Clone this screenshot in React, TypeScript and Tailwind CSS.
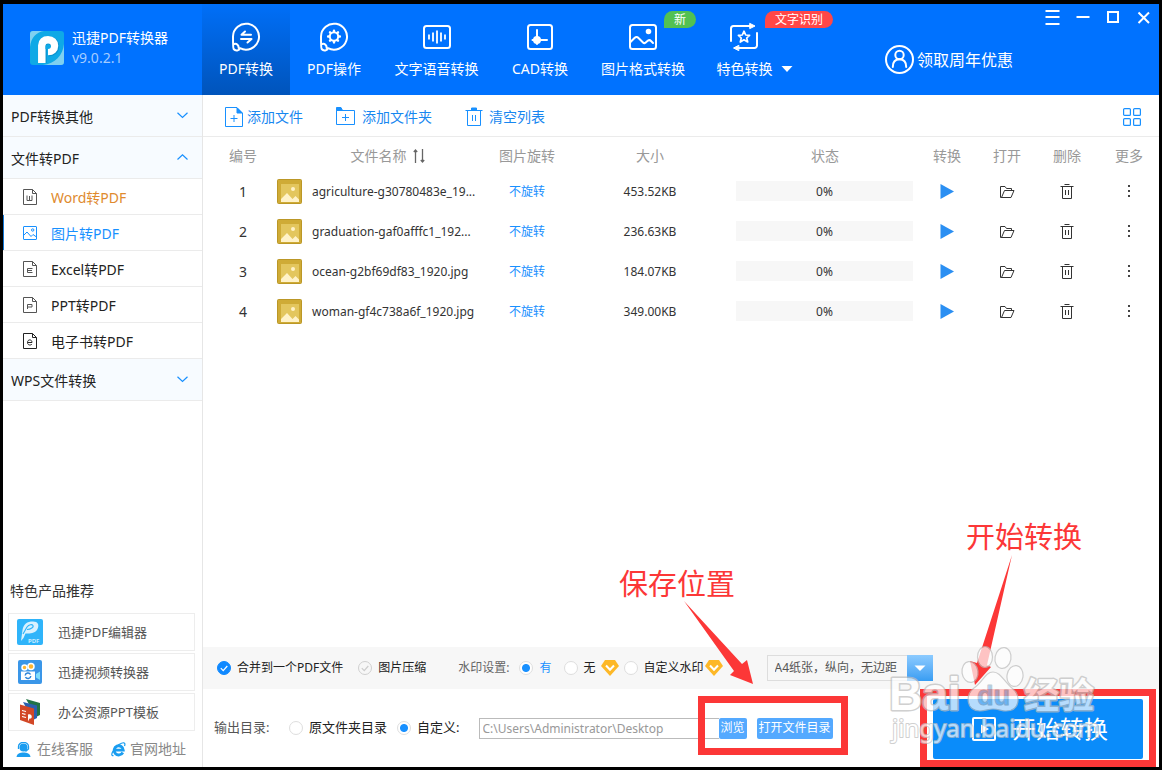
import React from 'react';

const RED = '#fc3737';

const files = [
  { name: 'agriculture-g30780483e_19...', size: '453.52KB' },
  { name: 'graduation-gaf0afffc1_192...', size: '236.63KB' },
  { name: 'ocean-g2bf69df83_1920.jpg', size: '184.07KB' },
  { name: 'woman-gf4c738a6f_1920.jpg', size: '349.00KB' },
];

const BubbleShape = () => (
  <path d="M2 14.5A13 13 0 1 1 9 26.2C8.2 28.6 4.6 29.4 2.6 27 2 26.2 2 25 2 14.5ZM3.2 22C5.6 21 8 23.5 7.6 26" strokeWidth="2" />
);

const NavSvg: React.FC<{ children: React.ReactNode }> = ({ children }) => (
  <svg width="30" height="30" viewBox="0 0 30 30" fill="none" stroke="white" strokeWidth="2" strokeLinecap="round" strokeLinejoin="round">
    {children}
  </svg>
);

const ConvertIcon = () => (
  <NavSvg>
    <BubbleShape />
    <path d="M10.5 12.8H20M10.5 12.8L14 9.5M10 17H20.5L16.5 20.5" strokeWidth="2" />
  </NavSvg>
);

const OperateIcon = () => (
  <NavSvg>
    <BubbleShape />
    <circle cx="15" cy="14.5" r="4.2" />
    <path d="M15 8.6V9.4M15 19.6V20.4M9.1 14.5H9.9M20.1 14.5H20.9M11 10.3L11.5 10.8M18.5 18.2L19 18.7M11 18.7L11.5 18.2M18.5 10.8L19 10.3" strokeWidth="2.4" />
  </NavSvg>
);

const VoiceIcon = () => (
  <NavSvg>
    <rect x="2" y="4" width="26" height="22" rx="2.5" />
    <path d="M7 12.5V17.5M11 10.5V19.5M15 8.5V21.5M19 10.5V19.5M23 12.5V17.5" strokeWidth="1.8" strokeLinecap="butt" />
  </NavSvg>
);

const CadIcon = () => (
  <NavSvg>
    <rect x="3" y="3" width="24" height="24" rx="2.5" />
    <path d="M12 8V22M7.5 18H22" />
    <circle cx="12" cy="18" r="3" fill="white" />
  </NavSvg>
);

const PictureIcon = () => (
  <NavSvg>
    <rect x="2" y="3" width="26" height="24" rx="2.5" />
    <circle cx="20.5" cy="9.5" r="1.8" fill="white" />
    <path d="M2.5 20L6.5 16C8 14.5 9.2 14.5 10.5 16L15 20.5C16 21.5 17 21.3 18 20.3L20 18.6C21 17.9 22 18 23 19L25 21" />
  </NavSvg>
);

const SpecialIcon = () => (
  <NavSvg>
    <path d="M2 19V6.5A2.5 2.5 0 0 1 4.5 4H21M28 11V23.5A2.5 2.5 0 0 1 25.5 26H9" />
    <path d="M21 1.5L26 4L21 6.5ZM9.5 23.5L4.5 26L9.5 28.5Z" fill="white" strokeWidth="1" />
    <path d="M15 9.2L16.7 13L20.6 13.3L17.7 16L18.7 20L15 17.8L11.3 20L12.3 16L9.4 13.3L13.3 13Z" strokeWidth="1.7" />
  </NavSvg>
);

const navItems: { label: string; icon: React.ReactNode; width: string; active?: boolean; menu?: boolean; badge?: string; badgeClass?: string }[] = [
  { label: 'PDF转换', icon: <ConvertIcon />, width: 'w-22', active: true },
  { label: 'PDF操作', icon: <OperateIcon />, width: 'w-22' },
  { label: '文字语音转换', icon: <VoiceIcon />, width: 'w-[117px]' },
  { label: 'CAD转换', icon: <CadIcon />, width: 'w-[90px]' },
  { label: '图片格式转换', icon: <PictureIcon />, width: 'w-[116px]', badge: '新', badgeClass: 'bg-[#52c152] left-[79px] w-8' },
  { label: '特色转换', icon: <SpecialIcon />, width: 'w-[107px]', menu: true, badge: '文字识别', badgeClass: 'bg-[#ff4747] left-16 w-[68px]' },
];

const Logo = () => (
  <svg width="34" height="34" viewBox="0 0 34 34">
    <rect width="34" height="34" rx="3" fill="#0fa9e6" />
    <path d="M0 16C1 7 6 1 14 0H3A3 3 0 0 0 0 3ZM34 13C33 24 25 33 13 34H31A3 3 0 0 0 34 31Z" fill="#7fd0f0" />
    <path d="M12.500 32V15C12.500 11.500 15 9.500 18.500 9.500C22.500 9.500 25 12 25 15.500C25 19 22.500 21.200 18.500 21.200" fill="none" stroke="#0b93cf" strokeWidth="8.500" />
    <path d="M11.800 32V14.200C11.800 10.800 14 8.800 18 8.800C22.200 8.800 24.500 11.200 24.500 14.700C24.500 18.200 22.200 20.500 18 20.500" fill="none" stroke="white" strokeWidth="7.500" />
    <path d="M15.500 15A3 3 0 0 1 21 15A3 3 0 0 1 18 18H15.500Z" fill="#0fa9e6" />
  </svg>
);

const Header = () => (
  <header className="flex h-[91px] shrink-0 bg-[#0072ff] text-white">
    <div className="flex w-[199px] shrink-0 items-center gap-2 pl-[27px] pb-1">
      <Logo />
      <div>
        <h1 className="text-sm leading-5">迅捷PDF转换器</h1>
        <p className="text-sm leading-5 text-[#a5ccff]">v9.0.2.1</p>
      </div>
    </div>
    <nav className="flex shrink-0">
      {navItems.map((item) => (
        <button
          key={item.label}
          type="button"
          className={`relative flex flex-col items-center pt-[18px] text-sm leading-5 ${item.width} ${item.active ? 'bg-linear-to-b from-[#006ff8] to-[#0054bb]' : ''}`}
        >
          <span className="flex w-full justify-center">
            {item.icon}
            {item.menu && <span className="w-[22px]" />}
          </span>
          <span className="mt-[7px] flex items-center gap-2 whitespace-nowrap">
            {item.label}
            {item.menu && (
              <svg width="12" height="6" viewBox="0 0 12 6" fill="white"><path d="M0.5 0H11.5L6 6Z" /></svg>
            )}
          </span>
          {item.badge && (
            <span className={`absolute top-[7px] h-[17px] rounded-t-full rounded-br-full text-center text-xs leading-[17px] ${item.badgeClass}`}>
              {item.badge}
            </span>
          )}
        </button>
      ))}
    </nav>
    <div className="flex flex-1 justify-between pl-[77px]">
      <button type="button" className="flex items-center gap-[3px] whitespace-nowrap pt-5 text-base">
        <svg width="29" height="29" viewBox="0 0 29 29" fill="none" stroke="white" strokeWidth="2">
          <circle cx="14.5" cy="14.5" r="13.5" />
          <circle cx="14.5" cy="10" r="4.2" />
          <path d="M7.8 22C7.8 17 10.5 14.3 14.5 14.3S21.2 17 21.2 22" strokeLinecap="round" />
        </svg>
        领取周年优惠
      </button>
      <div className="flex items-start gap-4 pr-2 pt-1.5">
        <button type="button" aria-label="菜单">
          <svg width="15" height="15" viewBox="0 0 15 15" stroke="white" strokeWidth="2"><path d="M0.5 1H14.5M0.5 7H14.5M0.5 14H14.5" /></svg>
        </button>
        <button type="button" aria-label="最小化">
          <svg width="14" height="15" viewBox="0 0 14 15" stroke="white" strokeWidth="2"><path d="M0.5 7H13.5" /></svg>
        </button>
        <button type="button" aria-label="最大化">
          <svg width="14" height="15" viewBox="0 0 14 15" fill="none" stroke="white" strokeWidth="2"><rect x="2" y="2" width="10" height="10" /></svg>
        </button>
        <button type="button" aria-label="关闭">
          <svg width="15" height="15" viewBox="0 0 15 15" stroke="white" strokeWidth="2"><path d="M2.5 2.5L13 13M13 2.5L2.5 13" /></svg>
        </button>
      </div>
    </div>
  </header>
);

const GroupRow: React.FC<{ label: string; open?: boolean }> = ({ label, open }) => (
  <button type="button" className="flex h-[42px] w-full items-center justify-between border-b border-[#ebebeb] bg-[#f7fbff] pl-2 pr-3.5 text-sm text-[#222]">
    <span className="pt-0.5">{label}</span>
    <svg width="11" height="10" viewBox="0 0 11 10" fill="none" stroke="#1890ff" strokeWidth="1.2">
      <path d={open ? 'M0.5 6.5L5.5 1.8L10.5 6.5' : 'M0.5 1.8L5.5 6.5L10.5 1.8'} />
    </svg>
  </button>
);

const DocIcon: React.FC<{ d: string; color: string }> = ({ d, color }) => (
  <svg width="14" height="16" viewBox="0 0 14 16" fill="none" stroke={color} strokeWidth="1">
    <path d="M0.5 0.5H9.5L13.5 4.5V15.5H0.5ZM9.5 0.5V4.5H13.5" />
    <path d={d} />
  </svg>
);

const sideItems = [
  { label: 'Word转PDF', className: 'text-[#e08a2e]', icon: <DocIcon color="#555" d="M4 6.5V11.5H6.5V7V11.5H9V6.5" /> },
  {
    label: '图片转PDF',
    className: 'text-[#1890ff] shadow-[inset_1px_0_0_#1578d6]',
    icon: (
      <svg width="14" height="16" viewBox="0 0 14 16" fill="none" stroke="#1890ff">
        <rect x="0.5" y="1.5" width="13" height="13" rx="0.5" />
        <circle cx="9.7" cy="5" r="1.2" />
        <path d="M0.5 10.5L4 7L8 11.5L10 9.5L13.5 12" />
      </svg>
    ),
  },
  { label: 'Excel转PDF', className: 'text-[#222]', icon: <DocIcon color="#555" d="M9.5 7.5H4.5V11.5H9.5M4.5 9.5H9" /> },
  { label: 'PPT转PDF', className: 'text-[#222]', icon: <DocIcon color="#555" d="M4.5 12V7.5H9V10H4.5" /> },
  { label: '电子书转PDF', className: 'text-[#222]', icon: <DocIcon color="#222" d="M4.5 9.5H9C9 6 4.5 6 4.5 9.5C4.5 12.5 8 12.5 9 11" /> },
];

const products = [
  {
    label: '迅捷PDF编辑器',
    icon: (
      <svg width="28" height="28" viewBox="0 0 28 28">
        <rect x="1" y="1" width="26" height="26" rx="2" fill="#2fb4fa" />
        <path d="M5 23L6.5 12C7.5 6 11 3.5 17 3.5C22 3.5 23.500 7 21.500 11C19.500 15 14.500 16 9.500 15.500L7.500 20Z" fill="#d9f1fe" />
        <path d="M7 16L11 9C13 6.500 16 6 17 7.500C18 9 15 11.500 11 11.500" fill="none" stroke="#2fb4fa" strokeWidth="1.2" />
        <text x="12" y="25" fontSize="6" fontWeight="700" fill="#c8ebff" fontFamily="Noto Sans">PDF</text>
      </svg>
    ),
  },
  {
    label: '迅捷视频转换器',
    icon: (
      <svg width="28" height="28" viewBox="0 0 28 28">
        <rect x="2" y="2" width="24" height="24" rx="2" fill="#3a96e8" />
        <circle cx="8.500" cy="9.500" r="2.500" fill="#ffb52e" stroke="white" strokeWidth="1.500" />
        <circle cx="15" cy="8.500" r="3" fill="#ffb52e" stroke="white" strokeWidth="1.500" />
        <path d="M5 13.500H19V22H5Z" fill="white" />
        <path d="M20 16L24 13.500V22L20 19.500Z" fill="#7fdcfb" />
        <path d="M9.200 17.500A2.800 2.800 0 0 1 14.500 16.500M14.800 18A2.800 2.800 0 0 1 9.500 19" fill="none" stroke="#2b83d8" strokeWidth="1.500" />
      </svg>
    ),
  },
  {
    label: '办公资源PPT模板',
    icon: (
      <svg width="28" height="28" viewBox="0 0 28 28">
        <path d="M10 1L24 5V17L20 19Z" fill="#217346" />
        <path d="M7 4L21 7.500V20L17 22Z" fill="#2b5fae" />
        <path d="M4 6.500L18 10.500V27L4 22Z" fill="#d24726" />
        <path d="M6 12.500L10 13.500M6 15.500L9.500 16.300M6 18.500L10 19.500" stroke="white" strokeWidth="1.200" />
        <path d="M12 23.500V16.500C16.500 14.500 17 21.500 13.500 20.500" fill="white" />
      </svg>
    ),
  },
];

const Sidebar = () => (
  <aside className="flex w-[200px] shrink-0 flex-col border-r border-[#e6e6e6] bg-white">
    <GroupRow label="PDF转换其他" />
    <GroupRow label="文件转PDF" open />
    <ul>
      {sideItems.map((item) => (
        <li key={item.label} className="border-b border-[#ebebeb]">
          <button type="button" className={`flex h-[35px] w-full items-center gap-3.5 pl-5 text-sm ${item.className}`}>
            {item.icon}
            <span className="pt-0.5">{item.label}</span>
          </button>
        </li>
      ))}
    </ul>
    <GroupRow label="WPS文件转换" />
    <section className="mt-auto pl-[5px] pr-[7px] pb-2">
      <h2 className="pl-0.5 text-sm leading-5 text-[#333]">特色产品推荐</h2>
      <ul className="mt-3 flex flex-col gap-0.5">
        {products.map((p) => (
          <li key={p.label}>
            <button type="button" className="flex h-[38px] w-full items-center gap-3.5 border border-[#ededed] pl-[7px] text-[13px] text-[#555]">
              {p.icon}
              <span className="pt-0.5">{p.label}</span>
            </button>
          </li>
        ))}
      </ul>
      <div className="mt-2 flex gap-[18px] pl-2 text-sm leading-5 text-[#888]">
        <a href="#service" className="flex items-center gap-1.5">
          <svg width="15" height="15" viewBox="0 0 15 15">
            <circle cx="7.500" cy="5.500" r="4" fill="#1a9df0" />
            <path d="M2.500 7V4.500A5 4.200 0 0 1 12.500 4.500V7L9.500 9.500" fill="none" stroke="#1a9df0" strokeWidth="1.300" />
            <path d="M0.500 15C1 11.500 4 10.500 7.500 10.500S14 11.500 14.500 15Z" fill="#1a9df0" />
          </svg>
          在线客服
        </a>
        <a href="#site" className="flex items-center gap-1">
          <svg width="15" height="15" viewBox="0 0 15 15" fill="none" stroke="#1a9df0">
            <path d="M11.800 10.500A4.600 4.600 0 1 1 12.300 8.200H4" strokeWidth="2.800" />
            <path d="M2.500 13.500C-1 15 1 7.500 8 2.500C12 0 15 0 13.500 4" strokeWidth="1.200" />
          </svg>
          官网地址
        </a>
      </div>
    </section>
  </aside>
);

const Toolbar = () => (
  <div className="flex h-[42px] shrink-0 items-center justify-between border-b border-[#ebebeb] pl-[22px] pr-[18px] pt-0.5 text-sm text-[#1787f0]">
    <div className="flex items-center gap-[33px]">
      <button type="button" className="flex items-center gap-1">
        <svg width="18" height="20" viewBox="0 0 18 20" fill="none" stroke="#1890ff">
          <path d="M0.500 0.500H12L17.500 6V19.500H0.500ZM9 8V15M5.500 11.500H12.500" />
          <path d="M12 1V6H17Z" fill="#1890ff" />
        </svg>
        添加文件
      </button>
      <button type="button" className="flex items-center gap-[7px]">
        <svg width="19" height="19" viewBox="0 0 19 19" fill="none" stroke="#1890ff">
          <path d="M0.500 3.500H18.500V17.500H0.500ZM9.500 7V14M6 10.500H13" />
          <path d="M0.500 3.500V0.500H5L6.500 3.500Z" fill="#1890ff" />
        </svg>
        添加文件夹
      </button>
      <button type="button" className="flex items-center gap-[5px]">
        <svg width="19" height="19" viewBox="0 0 19 19" fill="none" stroke="#1890ff">
          <path d="M2.500 3.500V18.500H15.500V3.500M0.500 3.500H17.500M7.500 8V14M10.500 8V14" />
          <path d="M6.500 1H11.500V3H6.500Z" fill="#1890ff" />
        </svg>
        清空列表
      </button>
    </div>
    <button type="button" aria-label="视图">
      <svg width="18" height="18" viewBox="0 0 18 18" fill="none" stroke="#1890ff" strokeWidth="1.200">
        <rect x="0.600" y="0.600" width="6.800" height="6.800" rx="1" />
        <rect x="10.600" y="0.600" width="6.800" height="6.800" rx="1" />
        <rect x="0.600" y="10.600" width="6.800" height="6.800" rx="1" />
        <rect x="10.600" y="10.600" width="6.800" height="6.800" rx="1" />
      </svg>
    </button>
  </div>
);

const Thumb = () => (
  <svg className="shrink-0" width="25" height="25" viewBox="0 0 25 25">
    <rect x="0.500" y="0.500" width="24" height="24" rx="1" fill="#cfab36" stroke="#bb9726" />
    <rect x="4" y="5" width="18" height="18" fill="#e3c65e" />
    <circle cx="16" cy="10" r="2" fill="#fff2c8" />
    <path d="M4 23V20L10 14L15.500 20L18.500 17L22 20.500V23Z" fill="#fff2c8" />
  </svg>
);

const FileTable = () => (
  <table className="w-full table-fixed text-center text-[#333]">
    <colgroup>
      <col className="w-[74px]" />
      <col className="w-[210px]" />
      <col className="w-20" />
      <col className="w-[166px]" />
      <col />
      <col className="w-[60px]" />
      <col className="w-[60px]" />
      <col className="w-[60px]" />
      <col className="w-[62px]" />
    </colgroup>
    <thead>
      <tr className="h-[34px] text-sm text-[#999] *:pt-1 *:font-normal">
        <th className="pl-1.5">编号</th>
        <th className="pl-3">
          <span className="flex items-center justify-center gap-1.5">
            文件名称
            <svg width="13" height="14" viewBox="0 0 13 14" fill="none" stroke="#666" strokeWidth="1.300">
              <path d="M2.500 14V1M0.800 3L2.500 1L4.200 3M9.500 0V13M7.800 11L9.500 13L11.200 11" />
            </svg>
          </span>
        </th>
        <th>图片旋转</th>
        <th>大小</th>
        <th>状态</th>
        <th>转换</th>
        <th>打开</th>
        <th>删除</th>
        <th className="pl-0.5">更多</th>
      </tr>
    </thead>
    <tbody>
      {files.map((f, i) => (
        <tr key={f.name} className="h-10 text-xs">
          <td className="pl-1.5 pt-0.5 text-sm">{i + 1}</td>
          <td>
            <div className="flex items-center gap-2.5 whitespace-nowrap">
              <Thumb />
              <span className="pt-0.5">{f.name}</span>
            </div>
          </td>
          <td className="pt-0.5"><button type="button" className="text-[#1890ff]">不旋转</button></td>
          <td className="pt-0.5">{f.size}</td>
          <td className="pl-[3px] pr-1"><div className="h-5 bg-[#f7f7f7] leading-[22px]">0%</div></td>
          <td>
            <button type="button" aria-label="转换" className="align-middle">
              <svg width="14" height="15" viewBox="0 0 14 15" fill="#2b8ff2"><path d="M0.500 0L14 7.500L0.500 15Z" /></svg>
            </button>
          </td>
          <td>
            <button type="button" aria-label="打开" className="align-middle">
              <svg width="15" height="14" viewBox="0 0 15 14" fill="none" stroke="#333">
                <path d="M11.500 5V3.500H6.500L5 1.500H0.500V12.500H11L14 5.500H4.500L1.500 12.500" />
              </svg>
            </button>
          </td>
          <td>
            <button type="button" aria-label="删除" className="align-middle">
              <svg width="14" height="15" viewBox="0 0 14 15" fill="none" stroke="#333">
                <path d="M4.500 0.500H9.500M0.500 2.500H13.500M2.500 2.500V14.500H11.500V2.500M5.500 6V11M8.500 6V11" />
              </svg>
            </button>
          </td>
          <td className="pl-0.5">
            <button type="button" aria-label="更多" className="align-middle">
              <svg width="3" height="13" viewBox="0 0 3 13" fill="#444"><path d="M0 0H2V2H0ZM0 5H2V7H0ZM0 10H2V12H0Z" /></svg>
            </button>
          </td>
        </tr>
      ))}
    </tbody>
  </table>
);

const Check: React.FC<{ label: string; checked?: boolean }> = ({ label, checked }) => (
  <label className="flex items-center gap-1.5 whitespace-nowrap text-[#222]">
    <span className="grid place-items-center *:col-start-1 *:row-start-1">
      <input type="checkbox" defaultChecked={checked} className="peer size-3.5 appearance-none rounded-full border border-[#d0d0d0] checked:border-[#1089ff] checked:bg-[#1089ff]" />
      <svg className="pointer-events-none text-[#ccc] peer-checked:text-white" width="8" height="7" viewBox="0 0 8 7" fill="none" stroke="currentColor" strokeWidth="1.200"><path d="M0.800 3.200L3.200 5.600L7.300 1" /></svg>
    </span>
    {label}
  </label>
);

const Radio: React.FC<{ name: string; label: string; checked?: boolean; className?: string }> = ({ name, label, checked, className = 'text-[#222]' }) => (
  <label className={`flex items-center gap-1.5 whitespace-nowrap ${className}`}>
    <input
      type="radio"
      name={name}
      defaultChecked={checked}
      className="size-3.5 appearance-none rounded-full border border-[#dedede] bg-white checked:bg-[radial-gradient(circle,#1890ff_3.5px,#fff_4.5px)]"
    />
    {label}
  </label>
);

const Vip = () => (
  <svg width="18" height="16" viewBox="0 0 18 16">
    <path d="M4 0H14L18 6L9 16L0 6Z" fill="#fdb827" />
    <path d="M5 5.500L9 9.800L13 5.500" fill="none" stroke="white" strokeWidth="2" />
  </svg>
);

const OptionsBar = () => (
  <div className="flex h-[42px] shrink-0 items-center bg-[#f7f7f7] pl-3.5 text-xs text-[#666]">
    <Check label="合并到一个PDF文件" checked />
    <div className="ml-[15px]"><Check label="图片压缩" /></div>
    <fieldset className="ml-8 flex items-center">
      <span className="mr-2.5 whitespace-nowrap">水印设置:</span>
      <Radio name="watermark" label="有" checked className="text-[#1890ff]" />
      <span className="w-3" />
      <Radio name="watermark" label="无" />
      <span className="mx-[5px]"><Vip /></span>
      <Radio name="watermark" label="自定义水印" />
      <span className="ml-px"><Vip /></span>
    </fieldset>
    <div className="relative ml-11 w-[166px]">
      <select aria-label="纸张设置" className="h-[26px] w-full appearance-none border border-[#ddd] bg-transparent pl-[7px] text-[#555]">
        <option>A4纸张，纵向，无边距</option>
      </select>
      <span className="pointer-events-none absolute inset-y-0 right-0 flex w-[26px] items-center justify-center bg-linear-to-b from-[#8ccbff] to-[#379df2]">
        <svg width="12" height="6" viewBox="0 0 12 6" fill="white"><path d="M0.500 0.500H11.500L6 6Z" /></svg>
      </span>
    </div>
  </div>
);

const OutputBar = () => (
  <div className="flex h-[78px] shrink-0 items-center pl-[11px] pr-4 text-[13px] text-[#555]">
    <span className="mr-4 w-[59px] whitespace-nowrap">输出目录:</span>
    <Radio name="output" label="原文件夹目录" />
    <span className="w-2.5" />
    <Radio name="output" label="自定义:" checked />
    <input
      type="text"
      aria-label="输出路径"
      defaultValue="C:\Users\Administrator\Desktop"
      className="ml-[19px] h-[21px] w-60 border border-r-0 border-[#bbb] bg-white pl-[3px] text-xs text-[#999]"
    />
    <div className="relative flex shrink-0 gap-2.5 text-xs text-white">
      <button type="button" className="h-[21px] w-7 rounded-xs bg-[#54a9ff]">浏览</button>
      <button type="button" className="h-[21px] w-[76px] rounded-xs bg-[#54a9ff]">打开文件目录</button>
      <div className="pointer-events-none absolute -bottom-4 -left-[21px] -right-[15px] -top-[22px] border-7 border-[#fc3737]" />
    </div>
    <div className="relative mb-2 ml-auto shrink-0 self-end">
      <button type="button" className="flex h-[60px] w-[210px] items-center justify-center gap-4 rounded-xs bg-[#0a8cfa] pl-1 text-2xl text-white">
        <svg width="24" height="24" viewBox="0 0 24 24" fill="none" stroke="white" strokeWidth="2">
          <rect x="1" y="1" width="22" height="22" rx="1" />
          <path d="M9 7.500L17 12L9 16.500Z" fill="white" stroke="none" />
        </svg>
        开始转换
      </button>
      <div className="pointer-events-none absolute -bottom-2 -left-[13px] -right-[13px] -top-2.5 border-7 border-[#fc3737]" />
    </div>
  </div>
);

// red callouts and the site watermark float over the window
const Callouts = () => (
  <div className="pointer-events-none absolute inset-0 text-[29px] leading-[30px] text-[#fc3737]">
    <span className="absolute bottom-[168px] left-[616px] whitespace-nowrap">保存位置</span>
    <svg className="absolute bottom-[82px] left-[681px]" width="70" height="84" viewBox="0 0 70 84" fill={RED}>
      <path d="M0 0L58 63L63 59L69 83L46 74L50 70Z" />
    </svg>
    <span className="absolute bottom-[215px] right-[77px] whitespace-nowrap">开始转换</span>
    <svg className="absolute bottom-[82px] right-[147px]" width="42" height="130" viewBox="0 0 42 130" fill={RED}>
      <path d="M42 0L17 110L21 112L5 130L0 106L7 108Z" />
    </svg>
  </div>
);

const Watermark = () => (
  <svg className="pointer-events-none absolute bottom-[14px] right-[46px] opacity-70" width="224" height="110" viewBox="0 0 224 110" fill="white" stroke="#bdbdbd" strokeWidth="1.200" strokeLinejoin="round">
    <ellipse cx="81" cy="29" rx="8" ry="10.500" transform="rotate(-8 81 29)" />
    <ellipse cx="96" cy="14" rx="7.500" ry="10.500" />
    <ellipse cx="114" cy="15" rx="8" ry="10.500" transform="rotate(10 114 15)" />
    <ellipse cx="126" cy="33" rx="8" ry="10.500" transform="rotate(8 126 33)" />
    <path d="M104 29C96 29 94 39 85 45C76 52 77 68 91 68C97 68 99 66 104 66C110 66 112 68 117 68C131 68 132 53 124 46C115 39 112 29 104 29Z" />
    <text x="0" y="67" fontSize="46" fontWeight="700" fontFamily="Liberation Sans, sans-serif" strokeWidth="3" paintOrder="stroke">Bai</text>
    <text x="88" y="62" fontSize="27" fontWeight="700" fontFamily="Liberation Sans, sans-serif" fill="#8fc4f2" stroke="#aab8c4" strokeWidth="1">du</text>
    <text x="135" y="65" fontSize="35" fontWeight="700" fontFamily="Noto Sans CJK SC, sans-serif" strokeWidth="3" paintOrder="stroke">经验</text>
    <text x="3" y="94" fontSize="24" fontFamily="Noto Sans, sans-serif" strokeWidth="2" paintOrder="stroke">jingyan.baidu.com</text>
  </svg>
);

export default function App() {
  return (
    <div className="relative flex min-h-screen flex-col border-x-3 border-b-3 border-t-4 border-black bg-white font-['Noto_Sans','Noto_Sans_CJK_SC',sans-serif]">
      <Header />
      <div className="flex flex-1">
        <Sidebar />
        <main className="flex min-w-0 flex-1 flex-col">
          <Toolbar />
          <div className="flex-1">
            <FileTable />
          </div>
          <OptionsBar />
          <OutputBar />
        </main>
      </div>
      <Callouts />
      <Watermark />
    </div>
  );
}
